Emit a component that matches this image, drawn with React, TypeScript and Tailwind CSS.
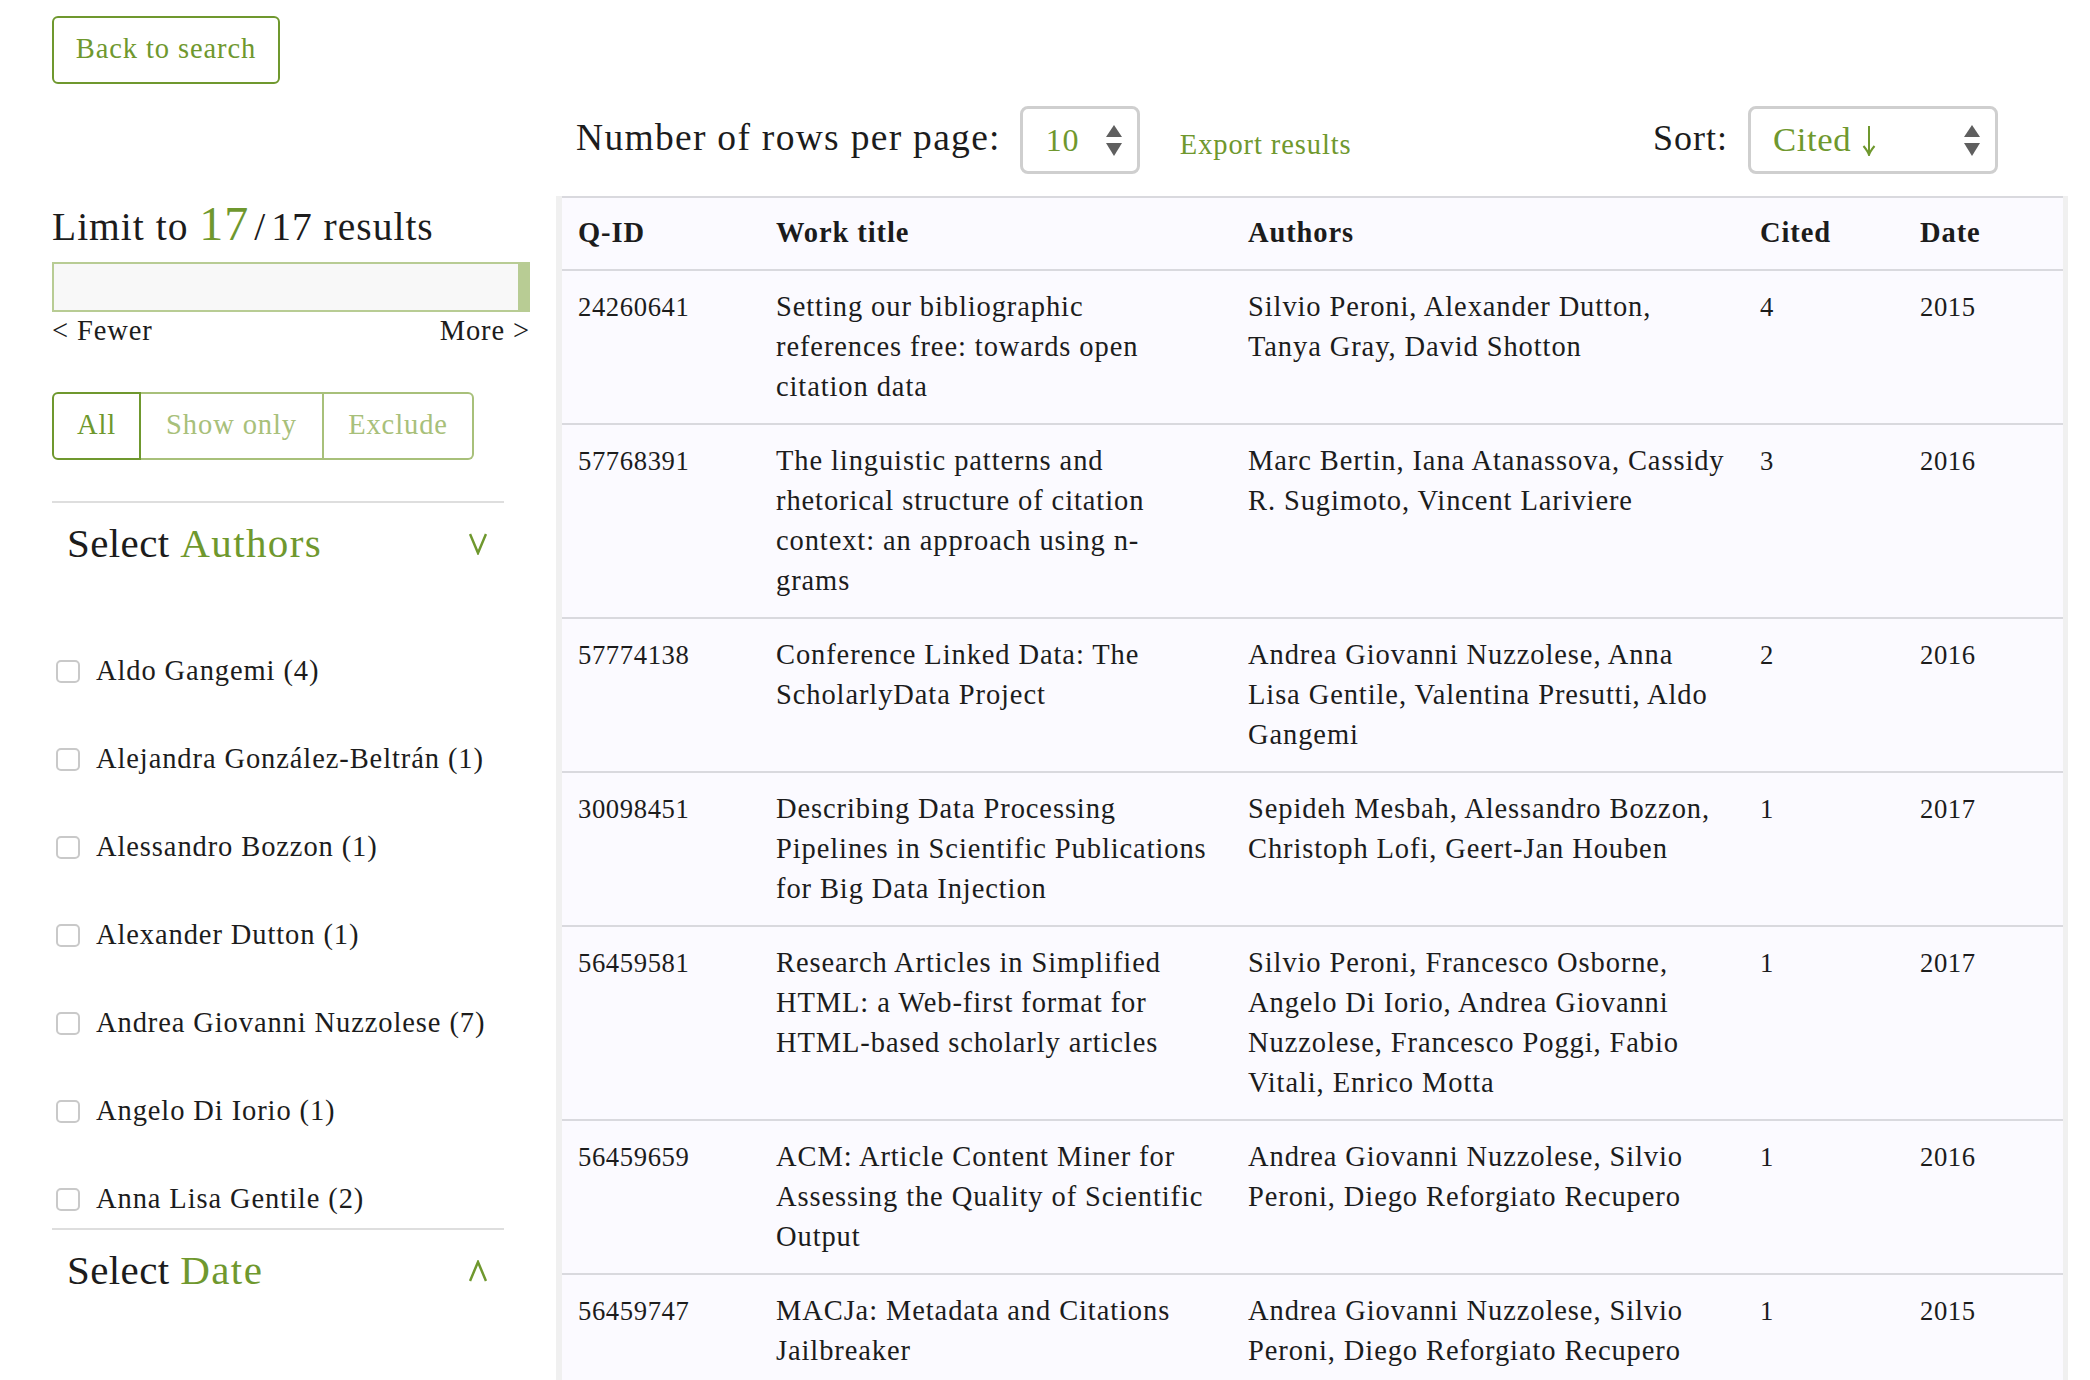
import React from 'react';

const works = [
  { id: '24260641', title: 'Setting our bibliographic\nreferences free: towards open\ncitation data', authors: 'Silvio Peroni, Alexander Dutton,\nTanya Gray, David Shotton', cited: 4, date: 2015 },
  { id: '57768391', title: 'The linguistic patterns and\nrhetorical structure of citation\ncontext: an approach using n-\ngrams', authors: 'Marc Bertin, Iana Atanassova, Cassidy\nR. Sugimoto, Vincent Lariviere', cited: 3, date: 2016 },
  { id: '57774138', title: 'Conference Linked Data: The\nScholarlyData Project', authors: 'Andrea Giovanni Nuzzolese, Anna\nLisa Gentile, Valentina Presutti, Aldo\nGangemi', cited: 2, date: 2016 },
  { id: '30098451', title: 'Describing Data Processing\nPipelines in Scientific Publications\nfor Big Data Injection', authors: 'Sepideh Mesbah, Alessandro Bozzon,\nChristoph Lofi, Geert-Jan Houben', cited: 1, date: 2017 },
  { id: '56459581', title: 'Research Articles in Simplified\nHTML: a Web-first format for\nHTML-based scholarly articles', authors: 'Silvio Peroni, Francesco Osborne,\nAngelo Di Iorio, Andrea Giovanni\nNuzzolese, Francesco Poggi, Fabio\nVitali, Enrico Motta', cited: 1, date: 2017 },
  { id: '56459659', title: 'ACM: Article Content Miner for\nAssessing the Quality of Scientific\nOutput', authors: 'Andrea Giovanni Nuzzolese, Silvio\nPeroni, Diego Reforgiato Recupero', cited: 1, date: 2016 },
  { id: '56459747', title: 'MACJa: Metadata and Citations\nJailbreaker', authors: 'Andrea Giovanni Nuzzolese, Silvio\nPeroni, Diego Reforgiato Recupero', cited: 1, date: 2015 },
];

const authors = [
  'Aldo Gangemi (4)',
  'Alejandra González-Beltrán (1)',
  'Alessandro Bozzon (1)',
  'Alexander Dutton (1)',
  'Andrea Giovanni Nuzzolese (7)',
  'Angelo Di Iorio (1)',
  'Anna Lisa Gentile (2)',
];

function Stepper() {
  return (
    <svg width="16" height="31" viewBox="0 0 16 31" className="shrink-0">
      <path d="M8 0 L16 12 L0 12 Z" fill="#5f5f5f" />
      <path d="M0 18 L16 18 L8 31 Z" fill="#5f5f5f" />
    </svg>
  );
}

function Chevron({ up }: { up?: boolean }) {
  return (
    <svg width="18" height="22" viewBox="0 0 18 22" fill="none" stroke="#6f982e" strokeWidth="2.5" className="mt-[2px]">
      <path d={up ? 'M1 21 L9 2 L17 21' : 'M1 1 L9 20 L17 1'} />
    </svg>
  );
}

function SectionTitle({ word, up }: { word: string; up?: boolean }) {
  return (
    <div className="flex h-[77px] w-[452px] items-center justify-between border-t-2 border-[#dedede] pl-[15px] pr-[17px] pt-[5px] text-[41px] tracking-[0.4px]">
      <span>
        Select <span className="tracking-[1.4px] text-[#6f982e]">{word}</span>
      </span>
      <Chevron up={up} />
    </div>
  );
}

export default function App() {
  return (
    <div className="h-[1380px] w-[2090px] overflow-hidden bg-white pl-[52px] pt-4 font-['Liberation_Serif',serif] text-[28.5px] leading-[40px] tracking-[0.9px] text-[#1c1c1c]">
      <button className="h-[68px] w-[228px] rounded-md border-2 border-[#6f982e] pb-[2px] text-center text-[#6f982e]">
        Back to search
      </button>

      <div className="mt-[22px] flex gap-[26px]">
        {/* Filters */}
        <aside className="w-[478px] shrink-0">
          <h2 className="mt-[92px] h-[64px] text-[39.5px] leading-[52px] tracking-[1px]">
            Limit to <span className="text-[48px] text-[#6f982e]">17</span>
            <span className="mx-[5px]">/</span>17 results
          </h2>
          <div className="flex h-[50px] border-2 border-[#b8cc94] bg-[#f8f8f8]">
            <div className="ml-auto w-[10px] bg-[#b8cc94]" />
          </div>
          <div className="flex h-[40px] justify-between pb-[2px] leading-[38px]">
            <span>&lt; Fewer</span>
            <span>More &gt;</span>
          </div>
          <div className="mt-[40px] flex h-[68px] w-[422px] leading-[62px] text-[#a8c07a]">
            <div className="w-[89px] rounded-l-md border-2 border-[#6f982e] text-center text-[#6f982e]">All</div>
            <div className="w-[183px] border-y-2 border-r-2 border-[#a8c07a] text-center">Show only</div>
            <div className="w-[150px] rounded-r-md border-y-2 border-r-2 border-[#a8c07a] text-center">Exclude</div>
          </div>

          <div className="mt-[41px]">
            <SectionTitle word="Authors" />
            <ul className="h-[650px] w-[452px] overflow-hidden pt-[49px]">
              {authors.map((a) => (
                <li key={a} className="flex h-[88px] items-center gap-4 pl-1">
                  <span className="h-[23px] w-6 shrink-0 rounded-[5px] border-2 border-[#c9c9c9] bg-white" />
                  <span className="whitespace-nowrap">{a}</span>
                </li>
              ))}
            </ul>
            <SectionTitle word="Date" up />
          </div>
        </aside>

        {/* Results */}
        <main className="w-[1512px]">
          <div className="flex h-[68px] items-center pl-[20px] pr-[70px] text-[37.5px] tracking-[1.3px]">
            <span className="pb-[4px]">Number of rows per page:</span>
            <div className="ml-[19px] flex h-[68px] w-[120px] items-center justify-between rounded-lg border-[3px] border-[#cfcfcf] pl-[23px] pr-[15px] text-[32px] tracking-[0.6px] text-[#6f982e]">
              10
              <Stepper />
            </div>
            <a className="ml-[40px] mt-[10px] text-[28.5px] tracking-[0.9px] text-[#6f982e]">Export results</a>
            <span className="ml-auto pb-[5px] text-[36px] tracking-[1px]">Sort:</span>
            <div className="ml-[20px] flex h-[68px] w-[250px] items-center justify-between rounded-lg border-[3px] border-[#cfcfcf] pl-[22px] pr-[15px] text-[34.67px] tracking-[0.6px] text-[#6f982e]">
              <span className="flex items-center gap-[11px] pb-[2px]">
                Cited
                <svg width="14" height="30" viewBox="0 0 14 30" fill="none" stroke="#6f982e" strokeWidth="2" className="mt-[4px]">
                  <path d="M7 0 V28 M1.5 20 C4 23 6 25.5 7 29 C8 25.5 10 23 12.5 20" />
                </svg>
              </span>
              <Stepper />
            </div>
          </div>

          <div className="mt-[22px] border-l-[6px] border-r-[5px] border-[#f0f0f0]">
            <table className="w-full table-fixed border-t-2 border-[#d9d9de] bg-[#fbfaff] text-left">
              <colgroup>
                <col className="w-[198px]" />
                <col className="w-[472px]" />
                <col className="w-[512px]" />
                <col className="w-[160px]" />
                <col />
              </colgroup>
              <thead>
                <tr className="h-[73px] border-b-2 border-[#d9d9de]">
                  <th className="px-4 pb-[1px] font-bold">Q-ID</th>
                  <th className="px-4 pb-[1px] font-bold">Work title</th>
                  <th className="px-4 pb-[1px] font-bold">Authors</th>
                  <th className="px-4 pb-[1px] font-bold">Cited</th>
                  <th className="px-4 pb-[1px] font-bold">Date</th>
                </tr>
              </thead>
              <tbody>
                {works.map((w) => (
                  <tr key={w.id} className="border-b-2 border-[#d9d9de] align-top">
                    <td className="p-4 text-[26.67px] tracking-[0.6px]">{w.id}</td>
                    <td className="whitespace-pre-line p-4">{w.title}</td>
                    <td className="whitespace-pre-line p-4">{w.authors}</td>
                    <td className="p-4 text-[26.67px] tracking-[0.6px]">{w.cited}</td>
                    <td className="p-4 text-[26.67px] tracking-[0.6px]">{w.date}</td>
                  </tr>
                ))}
              </tbody>
            </table>
          </div>
        </main>
      </div>
    </div>
  );
}
